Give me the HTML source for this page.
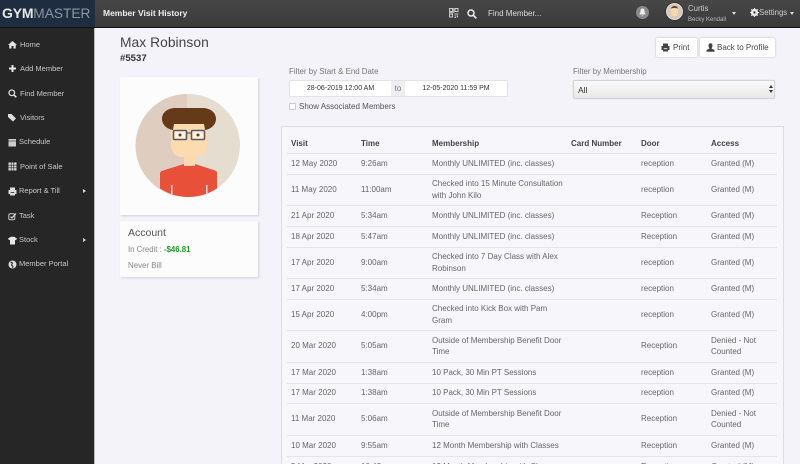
<!DOCTYPE html>
<html><head><meta charset="utf-8">
<style>
*{box-sizing:border-box}
html,body{margin:0;padding:0;width:800px;height:464px;overflow:hidden}
#root{position:relative;width:800px;height:464px;overflow:hidden;background:#f3f3f9;font-family:"Liberation Sans",sans-serif;color:#666}
.a{position:absolute;white-space:nowrap}
#top{left:0;top:0;width:800px;height:28px;background:linear-gradient(#474747,#3a3a3a);border-bottom:1px solid #111}
#logo{left:0;top:0;width:95px;height:28px;background:#1f2d40;border-bottom:1px solid #111}
#side{left:0;top:28px;width:94px;height:436px;background:#262626}
#sl{left:94px;top:28px;width:1px;height:436px;background:#bbb}
.n{position:absolute;color:#c9c9c9;font-size:7.500px;line-height:12px;white-space:nowrap}
.i{position:absolute;left:8px;width:9px;height:9px}
.card{position:absolute;background:#fcfcfd;box-shadow:1px 1px 2px #d0d0d8}
.btn{position:absolute;top:38px;height:19px;background:#fff;border-radius:2px;box-shadow:0 0 2px #bbb;color:#444;font-size:8px;line-height:19px;white-space:nowrap}
#panel{position:absolute;left:281px;top:126px;width:503px;height:345px;background:#f7f7fb;border:1px solid #dcdce4;overflow:hidden}
table{position:absolute;left:5px;top:0;width:490px;border-collapse:collapse;table-layout:fixed;font-size:8px;line-height:11.300px;color:#666}
td,th{padding:0 0 0 4px;text-align:left;vertical-align:middle;border-bottom:1px solid #e4e4ea;font-weight:normal;white-space:nowrap}
th{height:26px;color:#444;font-weight:bold;font-size:8px;padding-top:8px}
tr.s td{height:21px}
tr.t td{height:20px}
tr.d td{height:31px}
tr.e td{height:32px}
</style></head><body><div id="root">
<div class="a" id="top"></div>
<div class="a" id="logo"></div>
<div class="a" style="left:2px;top:4px;font-size:14px;line-height:19px;color:#e8e8e8;font-weight:bold;letter-spacing:-.2px">GYM<span style="font-weight:normal;font-size:13.700px;color:#8d97a3;letter-spacing:0">MASTER</span></div>
<div class="a" style="left:103px;top:7px;font-size:8.500px;line-height:13px;color:#eee;font-weight:bold">Member Visit History</div>

<svg class="a" style="left:449px;top:8px" width="10" height="10" viewBox="0 0 10 10"><g fill="none" stroke="#ccc" stroke-width="1"><rect x=".5" y=".5" width="3" height="3"/><rect x="6" y=".5" width="3" height="3"/><rect x=".5" y="6" width="3" height="3"/><path d="M5.500 6h4M5.500 8h2M8.500 7.500v2M5.500 9.500h1.500M4.800 0v5M0 4.800h4"/></g></svg>
<svg class="a" style="left:467px;top:9px" width="10" height="10" viewBox="0 0 10 10"><circle cx="4" cy="4" r="3" fill="none" stroke="#eee" stroke-width="1.500"/><path d="M6.300 6.300L9.300 9.300" stroke="#eee" stroke-width="1.700"/></svg>
<div class="a" style="left:488px;top:7px;font-size:8px;line-height:14px;color:#ddd">Find Member...</div>
<div class="a" style="left:636px;top:6px;width:13px;height:13px;border-radius:50%;background:#8a8a8a"></div>
<svg class="a" style="left:639px;top:8px" width="7" height="9" viewBox="0 0 7 9"><path d="M3.500 .5C2 .5 1.500 1.700 1.500 3C1.500 5 .5 5.500 .5 6.500H6.500C6.500 5.500 5.500 5 5.500 3C5.500 1.700 5 .5 3.500 .5ZM2.700 7.200H4.300L3.500 8.200Z" fill="#eee"/></svg>
<div class="a" style="left:666px;top:3px;width:17px;height:17px;border-radius:50%;background:#d9c9b8;border:1px solid #ddd;box-shadow:0 0 0 1px #333"></div>
<div class="a" style="left:671px;top:6px;width:7px;height:10px;border-radius:3px;background:#f6d8ae;border-top:2px solid #6b4423"></div>
<div class="a" style="left:688px;top:3px;font-size:7.800px;line-height:12px;color:#ccc">Curtis</div>
<div class="a" style="left:688px;top:15px;font-size:6px;line-height:10px;color:#bbb">Becky Kendall</div>
<div class="a" style="left:732px;top:12px;border:2.500px solid transparent;border-top:3px solid #ddd"></div>
<svg class="a" style="left:750px;top:8px" width="9" height="9" viewBox="0 0 9 9"><circle cx="4.500" cy="4.500" r="2.600" fill="none" stroke="#eee" stroke-width="2"/><path d="M4.500 0V9M0 4.500H9M1.300 1.300L7.700 7.700M7.700 1.300L1.300 7.700" stroke="#eee" stroke-width="1.100"/><circle cx="4.500" cy="4.500" r="1.200" fill="#404040"/></svg>
<div class="a" style="left:759px;top:6px;font-size:7.800px;line-height:14px;color:#ccc">Settings</div>
<div class="a" style="left:790px;top:12px;border:2.500px solid transparent;border-top:3px solid #ddd"></div>

<div class="a" id="side"></div>
<div class="a" id="sl"></div>
<svg class="i" style="top:40px" viewBox="0 0 9 9"><path d="M4.500 1L0 5H1.300V8.500H3.500V6H5.500V8.500H7.700V5H9Z" fill="#e6e6e6"/></svg>
<div class="n" style="left:20px;top:39px">Home</div>
<svg class="i" style="top:64px" viewBox="0 0 9 9"><path d="M3.500 1H5.500V3.500H8V5.500H5.500V8H3.500V5.500H1V3.500H3.500Z" fill="#e6e6e6"/></svg>
<div class="n" style="left:20px;top:63px">Add Member</div>
<svg class="i" style="top:89px" viewBox="0 0 9 9"><circle cx="3.800" cy="3.800" r="2.800" fill="none" stroke="#ddd" stroke-width="1.300"/><path d="M5.800 5.800L8.300 8.300" stroke="#ddd" stroke-width="1.600"/></svg>
<div class="n" style="left:20px;top:88px">Find Member</div>
<svg class="i" style="top:113px" viewBox="0 0 9 9"><path d="M0 1H3.500L8 5.500L5 8.500L0 4Z" fill="#ddd"/></svg>
<div class="n" style="left:20px;top:112px">Visitors</div>
<svg class="i" style="top:138px" viewBox="0 0 9 9"><path d="M.5 1H8V8.500H.5Z" fill="#ccc"/><path d="M.5 3H8" stroke="#333" stroke-width=".6"/></svg>
<div class="n" style="left:19px;top:136px">Schedule</div>
<svg class="i" style="top:162px" viewBox="0 0 9 9"><path d="M.5 .5H8.500V8.500H.5Z" fill="#ddd"/><path d="M3.200 .5V8.500M5.800 .5V8.500M.5 3.200H8.500M.5 5.800H8.500" stroke="#262626" stroke-width=".7"/></svg>
<div class="n" style="left:20px;top:161px">Point of Sale</div>
<svg class="i" style="top:187px" viewBox="0 0 9 9"><path d="M2 .5H7V3H8.500V7H7V8.500H2V7H.5V3H2Z" fill="#ddd"/><path d="M2.700 5.500H6.300" stroke="#262626" stroke-width=".8"/></svg>
<div class="n" style="left:19px;top:185px">Report &amp; Till</div>
<div class="a" style="left:83px;top:189px;border:2px solid transparent;border-left:3px solid #ddd"></div>
<svg class="i" style="top:212px" viewBox="0 0 9 9"><rect x=".8" y="1.800" width="6" height="6" rx="1.500" fill="none" stroke="#ccc" stroke-width="1"/><path d="M2.500 4.500L4 6L8 1.500" fill="none" stroke="#ddd" stroke-width="1.200"/></svg>
<div class="n" style="left:19px;top:210px">Task</div>
<svg class="i" style="top:236px" viewBox="0 0 9 9"><path d="M3 .8H6L9 2.500L8 4.300L7 3.800V8.500H2V3.800L1 4.300L0 2.500Z" fill="#e6e6e6"/></svg>
<div class="n" style="left:19px;top:234px">Stock</div>
<div class="a" style="left:83px;top:238px;border:2px solid transparent;border-left:3px solid #ddd"></div>
<svg class="i" style="top:260px" viewBox="0 0 9 9"><circle cx="4.500" cy="4.500" r="4" fill="#ddd"/><path d="M2.500 2L4.500 3L3.500 5L5 6.500L4.500 8" fill="none" stroke="#262626" stroke-width="1"/></svg>
<div class="n" style="left:19px;top:258px">Member Portal</div>

<div class="a" style="left:120px;top:33px;font-size:13.800px;line-height:20px;color:#444;letter-spacing:.05px">Max Robinson</div>
<div class="a" style="left:120px;top:52px;font-size:9.600px;line-height:14px;color:#333;font-weight:bold">#5537</div>

<div class="card" style="left:120px;top:77px;width:138px;height:138px"></div>
<svg class="a" style="left:120px;top:77px" width="138" height="138" viewBox="0 0 138 138">
<defs><clipPath id="c"><circle cx="68.500" cy="68.500" r="51.500"/></clipPath></defs>
<circle cx="68.500" cy="68.500" r="51.500" fill="#e6ddd1"/>
<path d="M67 17A51.500 51.500 0 0 0 67 120Z" fill="#dfcdbf"/>
<g clip-path="url(#c)">
<path d="M40 97C40 95 41 94 43 93.500L64 87H75L95 93.500C97 94 97 95 97 97V125H40Z" fill="#e8503a"/>
<path d="M51 108H52.500V125H51ZM86 108H87.500V125H86Z" fill="#e6ddd1"/>
</g>
<rect x="64" y="76" width="11" height="13" fill="#fcd9af"/>
<path d="M51 44H87V68C87 76 82 80 76 80H62C56 80 51 76 51 68Z" fill="#fddbb0"/>
<path d="M53 53C46 52 42 47 42 42C42 35 48 31 56 31H82C90 31 96 35 96 42C96 47 92 52 85 53L84 47H54Z" fill="#653a19"/>
<rect x="53.500" y="53.500" width="13" height="9" rx="1" fill="#fff3df" stroke="#5b5b5f" stroke-width="1.600"/>
<rect x="71.500" y="53.500" width="13" height="9" rx="1" fill="#fff3df" stroke="#5b5b5f" stroke-width="1.600"/>
<path d="M66 56H72" stroke="#5b5b5f" stroke-width="1.200"/>
<circle cx="60" cy="58" r="1.500" fill="#653a19"/><circle cx="78" cy="58" r="1.500" fill="#653a19"/>
</svg>

<div class="card" style="left:120px;top:221px;width:138px;height:56px"></div>
<div class="a" style="left:128px;top:226px;font-size:10.500px;line-height:14px;color:#555">Account</div>
<div class="a" style="left:128px;top:244px;font-size:7.800px;line-height:12px;color:#888">In Credit : <b style="color:#1f9a1f">-$46.81</b></div>
<div class="a" style="left:128px;top:260px;font-size:7.900px;line-height:12px;color:#888">Never Bill</div>

<div class="btn" style="left:656px;width:41px;padding-left:17px">Print</div>
<svg class="a" style="left:661px;top:43px" width="9" height="9" viewBox="0 0 9 9"><path d="M2 .5H7V3H8.500V7H7V8.500H2V7H.5V3H2Z" fill="#444"/><path d="M2.700 5.700H6.300" stroke="#fff" stroke-width=".8"/></svg>
<div class="btn" style="left:700px;width:75px;padding-left:17px">Back to Profile</div>
<svg class="a" style="left:706px;top:43px" width="9" height="9" viewBox="0 0 9 9"><path d="M4.500 .3C6 .3 6.500 1.500 6.500 2.800C6.500 4 5.800 5 5.500 5.500L8.500 7V8.700H.5V7L3.500 5.500C3.200 5 2.500 4 2.500 2.800C2.500 1.500 3 .3 4.500 .3Z" fill="#444"/></svg>

<div class="a" style="left:289px;top:66px;font-size:7.900px;line-height:12px;color:#777">Filter by Start &amp; End Date</div>
<div class="a" style="left:289px;top:80px;width:219px;height:17px;background:#fff;border:1px solid #e2e2e8;border-radius:2px"></div>
<div class="a" style="left:391px;top:81px;width:14px;height:15px;background:#efeff2;color:#777;font-size:8px;line-height:15px;text-align:center">to</div>
<div class="a" style="left:290px;top:81px;width:101px;font-size:7px;line-height:16px;color:#333;text-align:center">28-06-2019 12:00 AM</div>
<div class="a" style="left:405px;top:81px;width:102px;font-size:7px;line-height:16px;color:#333;text-align:center">12-05-2020 11:59 PM</div>
<div class="a" style="left:289px;top:103px;width:7px;height:7px;background:#fff;border:1px solid #ccc;border-radius:1px"></div>
<div class="a" style="left:299px;top:101px;font-size:8px;line-height:12px;color:#555">Show Associated Members</div>

<div class="a" style="left:573px;top:66px;font-size:7.900px;line-height:12px;color:#777">Filter by Membership</div>
<div class="a" style="left:573px;top:80px;width:202px;height:19px;background:linear-gradient(#fafafa,#e8e8e8);border:1px solid #d2d2d8;border-radius:2px;box-shadow:0 0 1px #ccc;font-size:8.500px;line-height:18px;padding-left:4px;color:#333">All</div>
<div class="a" style="left:769px;top:85px;border:2px solid transparent;border-top:0;border-bottom:3px solid #333"></div>
<div class="a" style="left:769px;top:90px;border:2px solid transparent;border-bottom:0;border-top:3px solid #333"></div>

<div id="panel">
<table>
<colgroup><col style="width:70px"><col style="width:71px"><col style="width:139px"><col style="width:70px"><col style="width:70px"><col style="width:70px"></colgroup>
<tr><th>Visit</th><th>Time</th><th>Membership</th><th>Card Number</th><th>Door</th><th>Access</th></tr>
<tr class="s"><td>12 May 2020</td><td>9:26am</td><td>Monthly UNLIMITED (inc. classes)</td><td></td><td>reception</td><td>Granted (M)</td></tr>
<tr class="d"><td>11 May 2020</td><td>11:00am</td><td>Checked into 15 Minute Consultation<br>with John Kilo</td><td></td><td>reception</td><td>Granted (M)</td></tr>
<tr class="s"><td>21 Apr 2020</td><td>5:34am</td><td>Monthly UNLIMITED (inc. classes)</td><td></td><td>Reception</td><td>Granted (M)</td></tr>
<tr class="s"><td>18 Apr 2020</td><td>5:47am</td><td>Monthly UNLIMITED (inc. classes)</td><td></td><td>Reception</td><td>Granted (M)</td></tr>
<tr class="d"><td>17 Apr 2020</td><td>9:00am</td><td>Checked into 7 Day Class with Alex<br>Robinson</td><td></td><td>reception</td><td>Granted (M)</td></tr>
<tr class="s"><td>17 Apr 2020</td><td>5:34am</td><td>Monthly UNLIMITED (inc. classes)</td><td></td><td>reception</td><td>Granted (M)</td></tr>
<tr class="d"><td>15 Apr 2020</td><td>4:00pm</td><td>Checked into Kick Box with Pam<br>Gram</td><td></td><td>reception</td><td>Granted (M)</td></tr>
<tr class="e"><td>20 Mar 2020</td><td>5:05am</td><td>Outside of Membership Benefit Door<br>Time</td><td></td><td>Reception</td><td>Denied - Not<br>Counted</td></tr>
<tr class="s"><td>17 Mar 2020</td><td>1:38am</td><td>10 Pack, 30 Min PT Sessions</td><td></td><td>reception</td><td>Granted (M)</td></tr>
<tr class="t"><td>17 Mar 2020</td><td>1:38am</td><td>10 Pack, 30 Min PT Sessions</td><td></td><td>reception</td><td>Granted (M)</td></tr>
<tr class="e"><td>11 Mar 2020</td><td>5:06am</td><td>Outside of Membership Benefit Door<br>Time</td><td></td><td>Reception</td><td>Denied - Not<br>Counted</td></tr>
<tr class="s"><td>10 Mar 2020</td><td>9:55am</td><td>12 Month Membership with Classes</td><td></td><td>Reception</td><td>Granted (M)</td></tr>
<tr class="s"><td>5 Mar 2020</td><td>10:42am</td><td>12 Month Membership with Classes</td><td></td><td>Reception</td><td>Granted (M)</td></tr>
</table>
</div>
</div></body></html>
